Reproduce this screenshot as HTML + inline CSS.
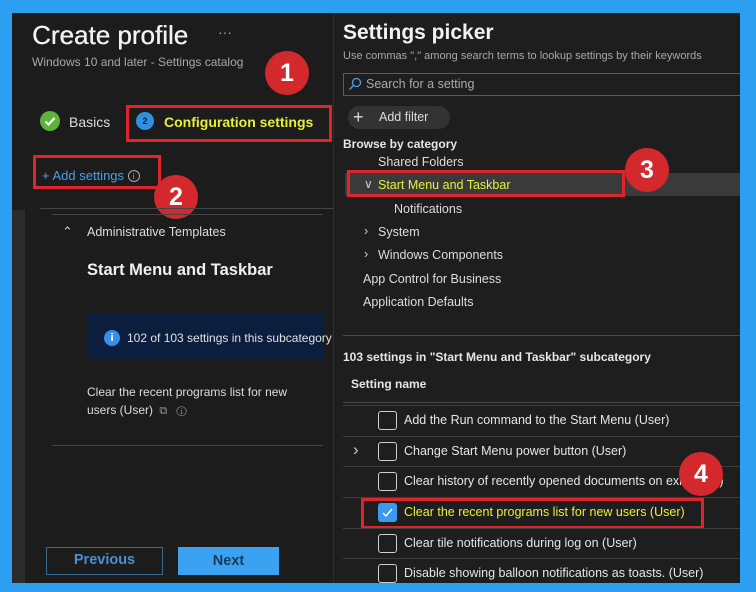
<!DOCTYPE html><html><head><meta charset="utf-8"><style>
*{margin:0;padding:0;box-sizing:border-box}
body{width:756px;height:592px;background:#2c9ff0;position:relative;overflow:hidden;font-family:"Liberation Sans",sans-serif;color:#e6e6e6}
.a{position:absolute;white-space:nowrap}
.badge{position:absolute;width:44px;height:44px;border-radius:50%;background:#d3282c;color:#fff;font-weight:bold;font-size:25px;text-align:center;line-height:44px}
.rb{position:absolute;border:3px solid #e0242c}
.cb{position:absolute;left:378px;width:19px;height:19px;border:1.5px solid #cfcfcf;border-radius:3px}
.rt{position:absolute;left:404px;font-size:12.5px;color:#e6e6e6}
.hl{position:absolute;height:1px;background:#3d3d3d}
</style></head><body>
<div class="a" style="left:12px;top:13px;width:322px;height:570px;background:#1c1c1c"></div>
<div class="a" style="left:12px;top:210px;width:13px;height:373px;background:#2b2b2b"></div>
<div class="a" style="left:334px;top:13px;width:406px;height:570px;background:#1e1e1e"></div>
<div class="a" style="left:333px;top:13px;width:1px;height:570px;background:#2e2e2e"></div>

<div class="a" style="left:32px;top:20px;font-size:26px;color:#f2f2f2;text-shadow:0.4px 0 0 #f2f2f2">Create profile</div>
<div class="a" style="left:218px;top:24px;font-size:14px;color:#aaa">···</div>
<div class="a" style="left:32px;top:55px;font-size:12px;color:#a8a8a8">Windows 10 and later - Settings catalog</div>
<div class="badge" style="left:265px;top:51px">1</div>

<div class="a" style="left:40px;top:111px;width:20px;height:20px;border-radius:50%;background:#5bb33a"></div>
<svg class="a" style="left:40px;top:111px" width="20" height="20"><path d="M5.5 10.5l3 3 6-6.5" stroke="#fff" stroke-width="2.2" fill="none"/></svg>
<div class="a" style="left:69px;top:114px;font-size:14px;color:#ddd">Basics</div>
<div class="rb" style="left:126px;top:105px;width:206px;height:37px"></div>
<div class="a" style="left:136px;top:112px;width:18px;height:18px;border-radius:50%;background:#2f8fe0;font-size:9px;color:#102040;text-align:center;line-height:18px;font-weight:bold">2</div>
<div class="a" style="left:164px;top:114px;font-size:14px;font-weight:bold;color:#e6f03a">Configuration settings</div>

<div class="rb" style="left:33px;top:155px;width:128px;height:34px"></div>
<div class="a" style="left:42px;top:168px;font-size:13px;color:#4a9ee6">+ Add settings <span style="display:inline-block;width:12px;height:12px;border:1px solid #aaa;border-radius:50%;font-size:8px;color:#aaa;text-align:center;line-height:11px;vertical-align:1px">i</span></div>
<div class="badge" style="left:154px;top:175px">2</div>
<div class="hl" style="left:40px;top:208px;width:294px;background:#444"></div>
<div class="hl" style="left:52px;top:214px;width:271px;background:#444"></div>

<div class="a" style="left:62px;top:224px;font-size:13px;color:#ccc">⌃</div>
<div class="a" style="left:87px;top:225px;font-size:12.5px;color:#ddd">Administrative Templates</div>
<div class="a" style="left:87px;top:261px;font-size:16.5px;font-weight:bold;color:#f0f0f0">Start Menu and Taskbar</div>
<div class="a" style="left:87px;top:313px;width:236px;height:47px;background:#0c1e3e"></div>
<div class="a" style="left:104px;top:330px;width:16px;height:16px;border-radius:50%;background:#3a8ee8;color:#fff;font-size:11px;font-weight:bold;text-align:center;line-height:16px">i</div>
<div class="a" style="left:127px;top:331px;font-size:12px;color:#e0e0e0">102 of 103 settings in this subcategory</div>
<div class="a" style="left:87px;top:383px;font-size:12px;color:#ddd;line-height:18px">Clear the recent programs list for new<br>users (User) <span style="color:#999;font-size:11px">&nbsp;⧉ &nbsp; ⓘ</span></div>
<div class="hl" style="left:52px;top:445px;width:271px;background:#444"></div>

<div class="a" style="left:46px;top:547px;width:117px;height:28px;border:1.5px solid #3a6a90;color:#4a90d0;font-weight:bold;font-size:14.5px;text-align:center;line-height:25px">Previous</div>
<div class="a" style="left:178px;top:547px;width:101px;height:28px;background:#3ba2f2;color:#1b3a5a;font-weight:bold;font-size:14.5px;text-align:center;line-height:28px">Next</div>

<div class="a" style="left:343px;top:21px;font-size:21px;font-weight:bold;color:#f2f2f2">Settings picker</div>
<div class="a" style="left:343px;top:50px;font-size:11px;color:#a8a8a8">Use commas "," among search terms to lookup settings by their keywords</div>
<div class="a" style="left:343px;top:73px;width:397px;height:23px;border:1px solid #5a5a5a;border-right:none"></div>
<svg class="a" style="left:348px;top:77px" width="14" height="14"><circle cx="8.5" cy="5.5" r="4" stroke="#4a9ee6" stroke-width="1.3" fill="none"/><path d="M5.5 8.5L1.5 12.5" stroke="#4a9ee6" stroke-width="1.4"/></svg>
<div class="a" style="left:366px;top:77px;font-size:12.5px;color:#aaa">Search for a setting</div>
<div class="a" style="left:348px;top:106px;width:102px;height:23px;border-radius:12px;background:#333"></div>
<div class="a" style="left:353px;top:106px;font-size:18px;color:#ddd;line-height:22px">+</div>
<div class="a" style="left:379px;top:110px;font-size:12.5px;color:#ddd">Add filter</div>
<div class="a" style="left:343px;top:137px;font-size:12px;font-weight:bold;color:#e6e6e6">Browse by category</div>
<div class="a" style="left:378px;top:155px;font-size:12.5px;color:#ddd">Shared Folders</div>
<div class="a" style="left:345px;top:173px;width:395px;height:23px;background:#3a3a3a"></div>
<div class="rb" style="left:347px;top:170px;width:278px;height:27px"></div>
<div class="a" style="left:364px;top:177px;font-size:12px;color:#ccc">∨</div>
<div class="a" style="left:378px;top:178px;font-size:12.5px;color:#e6f03a">Start Menu and Taskbar</div>
<div class="badge" style="left:625px;top:148px">3</div>
<div class="a" style="left:394px;top:202px;font-size:12.5px;color:#ddd">Notifications</div>
<div class="a" style="left:364px;top:224px;font-size:12.5px;color:#ccc">›</div>
<div class="a" style="left:378px;top:225px;font-size:12.5px;color:#ddd">System</div>
<div class="a" style="left:364px;top:247px;font-size:12.5px;color:#ccc">›</div>
<div class="a" style="left:378px;top:248px;font-size:12.5px;color:#ddd">Windows Components</div>
<div class="a" style="left:363px;top:272px;font-size:12.5px;color:#ddd">App Control for Business</div>
<div class="a" style="left:363px;top:295px;font-size:12.5px;color:#ddd">Application Defaults</div>
<div class="hl" style="left:343px;top:335px;width:397px;background:#4a4a4a"></div>
<div class="a" style="left:343px;top:350px;font-size:12px;font-weight:bold;color:#e6e6e6">103 settings in "Start Menu and Taskbar" subcategory</div>
<div class="a" style="left:351px;top:377px;font-size:12px;font-weight:bold;color:#e6e6e6">Setting name</div>
<div class="hl" style="left:343px;top:402px;width:397px;background:#4a4a4a"></div>
<div class="hl" style="left:343px;top:405px;width:397px"></div>

<div class="cb" style="top:411px"></div><div class="rt" style="top:413px">Add the Run command to the Start Menu (User)</div>
<div class="hl" style="left:343px;top:436px;width:397px"></div>
<div class="a" style="left:353px;top:440px;font-size:17px;color:#ccc">›</div>
<div class="cb" style="top:442px"></div><div class="rt" style="top:444px">Change Start Menu power button (User)</div>
<div class="hl" style="left:343px;top:466px;width:397px"></div>
<div class="cb" style="top:472px"></div><div class="rt" style="top:474px">Clear history of recently opened documents on exit (User)</div>
<div class="badge" style="left:679px;top:452px">4</div>
<div class="hl" style="left:343px;top:497px;width:397px"></div>
<div class="rb" style="left:361px;top:498px;width:343px;height:31px"></div>
<div class="a" style="left:378px;top:503px;width:19px;height:19px;background:#3a9af0;border-radius:3px"></div>
<svg class="a" style="left:378px;top:503px" width="19" height="19"><path d="M5 10l3 3 6-7" stroke="#fff" stroke-width="1.4" fill="none"/></svg>
<div class="rt" style="top:505px;color:#e6f03a">Clear the recent programs list for new users (User)</div>
<div class="hl" style="left:343px;top:528px;width:397px"></div>
<div class="cb" style="top:534px"></div><div class="rt" style="top:536px">Clear tile notifications during log on (User)</div>
<div class="hl" style="left:343px;top:558px;width:397px"></div>
<div class="cb" style="top:564px"></div><div class="rt" style="top:566px">Disable showing balloon notifications as toasts. (User)</div>
</body></html>
